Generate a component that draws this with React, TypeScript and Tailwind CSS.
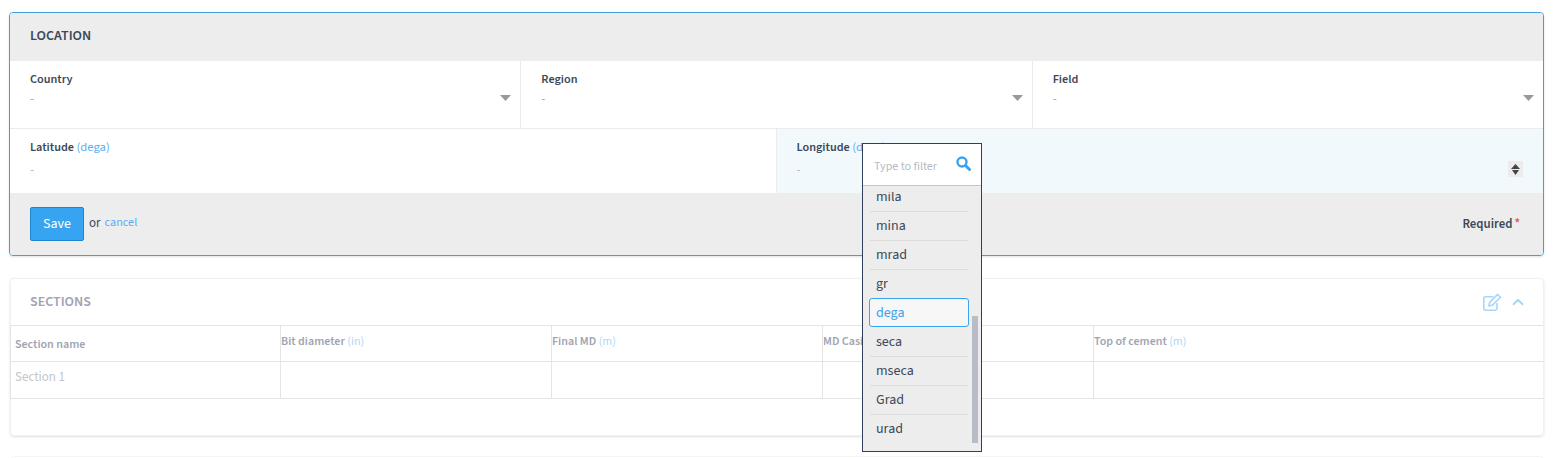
import { ChevronUp } from 'lucide-react';
import type { ReactNode } from 'react';

const units = ['mila', 'mina', 'mrad', 'gr', 'dega', 'seca', 'mseca', 'Grad', 'urad'];

function Caret() {
  return (
    <svg width="11" height="6" viewBox="0 0 11 6" className="absolute right-[9px] top-[34px] text-[#999]">
      <path d="M0 0h11L5.5 6z" fill="currentColor" />
    </svg>
  );
}

function SelectCell({ label, last }: { label: string; last?: boolean }) {
  return (
    <div className={`relative flex-1 pl-5 pt-[11px] ${last ? '' : 'border-r border-[#ebebeb]'}`}>
      <div className="text-[12.2px] leading-[16px] font-semibold text-[#3c4858]">{label}</div>
      <div className="mt-[3px] text-[13px] leading-[16px] text-[#aaa]">-</div>
      <Caret />
    </div>
  );
}

function Th({ children, w }: { children: ReactNode; w: string }) {
  return <div className={`${w} border-r border-[#e4e4e4] pt-[7px] text-[12px] font-semibold text-[#a0a5b2]`}>{children}</div>;
}

export default function App() {
  return (
    <div className="relative h-[458px] overflow-hidden bg-white font-['Source_Sans_Pro','Source_Sans_3','Noto_Sans',sans-serif]">
      <div className="pl-[9px] pr-[13px] pt-3">
        {/* Location form */}
        <div className="overflow-hidden rounded-[4px] border border-[#3f9fe0] shadow-sm">
          <div className="flex h-[48px] items-center bg-[#ededed] pb-[2px] pl-5 text-[14px] font-semibold text-[#3c4858]">LOCATION</div>
          <div className="flex h-[68px] border-b border-[#ebebeb]">
            <SelectCell label="Country" />
            <SelectCell label="Region" />
            <SelectCell label="Field" last />
          </div>
          <div className="flex h-[64px]">
            <div className="w-1/2 border-r border-[#ebebeb] pl-5 pt-[10px]">
              <div className="text-[12.2px] leading-[16px] font-semibold text-[#3c4858]">
                Latitude <span className="text-[12.6px] font-normal text-[#5aaef0]">(dega)</span>
              </div>
              <div className="mt-[6px] text-[13px] leading-[16px] text-[#bbb]">-</div>
            </div>
            <div className="relative flex-1 bg-[#f2f9fd] pl-5 pt-[10px]">
              <div className="text-[12.2px] leading-[16px] font-semibold text-[#3c4858]">
                Longitude <span className="text-[12.6px] font-normal text-[#5aaef0]">(dega)</span>
              </div>
              <div className="mt-[6px] text-[13px] leading-[16px] text-[#bbb]">-</div>
              <div className="absolute right-[20px] top-[32px] flex h-[16px] w-[15px] flex-col items-center justify-center gap-[1px] bg-[#ececec]">
                <svg width="9" height="5" viewBox="0 0 9 5"><path d="M0 5h9L4.5 0z" fill="#444" /></svg>
                <svg width="9" height="5" viewBox="0 0 9 5"><path d="M1 0h7L4.5 5z" fill="#444" /></svg>
              </div>
            </div>
          </div>
          <div className="flex h-[62px] items-center justify-between bg-[#ededed] pl-5 pr-[23px]">
            <div className="flex items-center">
              <button className="h-[34px] w-[54px] rounded-[2px] border border-[#1c86c8] bg-[#36a4f0] pt-[1px] text-[14px] text-white">Save</button>
              <span className="ml-[5px] text-[13px] text-[#3c4858]">or</span>
              <span className="ml-[4px] pb-[2px] text-[12.2px] text-[#5aaef0]">cancel</span>
            </div>
            <div className="pt-[2px] text-[12.8px] font-semibold text-[#3c4858]">
              Required<span className="ml-[2px] text-[#e05a5a]">*</span>
            </div>
          </div>
        </div>

        {/* Sections, dimmed behind the overlay */}
        <div className="ml-[1px] mt-[22px] h-[158px] rounded-[4px] border border-[#f0f0f0] shadow-sm">
          <div className="flex h-[46px] items-center justify-between pl-[19px] pr-[16px]">
            <span className="text-[14px] font-semibold text-[#9fa4b1]">SECTIONS</span>
            <div className="flex items-center gap-[7px] text-[#a8d6f8]">
              <svg width="19" height="18" viewBox="0 0 19 18" fill="none" stroke="currentColor" strokeWidth="1.6">
                <path d="M14 10v5.6a1.6 1.6 0 0 1-1.6 1.6H2.4a1.6 1.6 0 0 1-1.6-1.6V5.4a1.6 1.6 0 0 1 1.6-1.6h8" />
                <path d="M6.6 9.4 14.6 1.4l2.8 2.8-8 8-3.4.6z" />
              </svg>
              <ChevronUp size={18} strokeWidth={2.4} />
            </div>
          </div>
          <div className="-ml-px border-y border-l border-[#e4e4e4]">
            <div className="flex h-[36px] border-b border-[#e4e4e4]">
              <Th w="w-[270px]"><div className="pl-[4px] pt-[3px]">Section name</div></Th>
              <Th w="w-[271px]">Bit diameter <span className="font-normal text-[#aed6f8]">(in)</span></Th>
              <Th w="w-[271px]">Final MD <span className="font-normal text-[#aed6f8]">(m)</span></Th>
              <Th w="w-[271px]">MD Casing <span className="font-normal text-[#aed6f8]">(m)</span></Th>
              <div className="flex-1 pt-[7px] text-[12px] font-semibold text-[#a0a5b2]">Top of cement <span className="font-normal text-[#aed6f8]">(m)</span></div>
            </div>
            <div className="flex h-[36px]">
              <div className="w-[270px] border-r border-[#e4e4e4] pl-[4px] pt-[6px] text-[13px] text-[#c4c6cc]">Section 1</div>
              <div className="w-[271px] border-r border-[#e4e4e4]" />
              <div className="w-[271px] border-r border-[#e4e4e4]" />
              <div className="w-[271px] border-r border-[#e4e4e4]" />
            </div>
          </div>
        </div>
        <div className="ml-[1px] mt-[20px] h-8 rounded-[4px] border border-[#f5f5f5]" />
      </div>

      {/* Unit picker, floats over the form */}
      <div className="absolute left-[862px] top-[143px] h-[309px] w-[120px] overflow-hidden border border-[#2f3f5c] bg-[#ededed]">
        <div className="flex h-[42px] items-center justify-between border-b border-[#c4c6cc] bg-white pl-[11px] pr-[10px]">
          <span className="pt-[4px] text-[12px] text-[#b5bac4]">Type to filter</span>
          <svg width="15" height="15" viewBox="0 0 15 15" fill="none" stroke="#3aa3ee" className="mb-[2px]">
            <circle cx="6" cy="6" r="4.5" strokeWidth="2.4" />
            <path d="M9.5 9.5 13.5 13.5" strokeWidth="3" strokeLinecap="round" />
          </svg>
        </div>
        <div className="relative h-[265px] overflow-hidden">
          <div className="absolute left-[6px] top-[-4px] w-[100px]">
            {units.map((u) => (
              <div
                key={u}
                className={
                  u === 'dega'
                    ? 'flex h-[29px] items-center rounded-[3px] border border-[#3aa3ee] bg-[#f7f7f7] pl-[6px] pt-[1px] text-[14px] text-[#3aa3ee]'
                    : `mx-px flex h-[29px] items-center pl-[6px] text-[14px] text-[#3c4858] ${u === 'mila' || u === 'seca' ? 'pt-[2px]' : 'border-t border-[#dcdcdc]'}`
                }
              >
                {u}
              </div>
            ))}
          </div>
          {/* list is clipped a few px under the filter box */}
          <div className="absolute inset-x-0 top-0 h-[6px] bg-[#ededed]" />
          <div className="absolute left-[109px] top-[130px] h-[127px] w-[6px] bg-[#b8bcc6]" />
        </div>
      </div>
    </div>
  );
}
